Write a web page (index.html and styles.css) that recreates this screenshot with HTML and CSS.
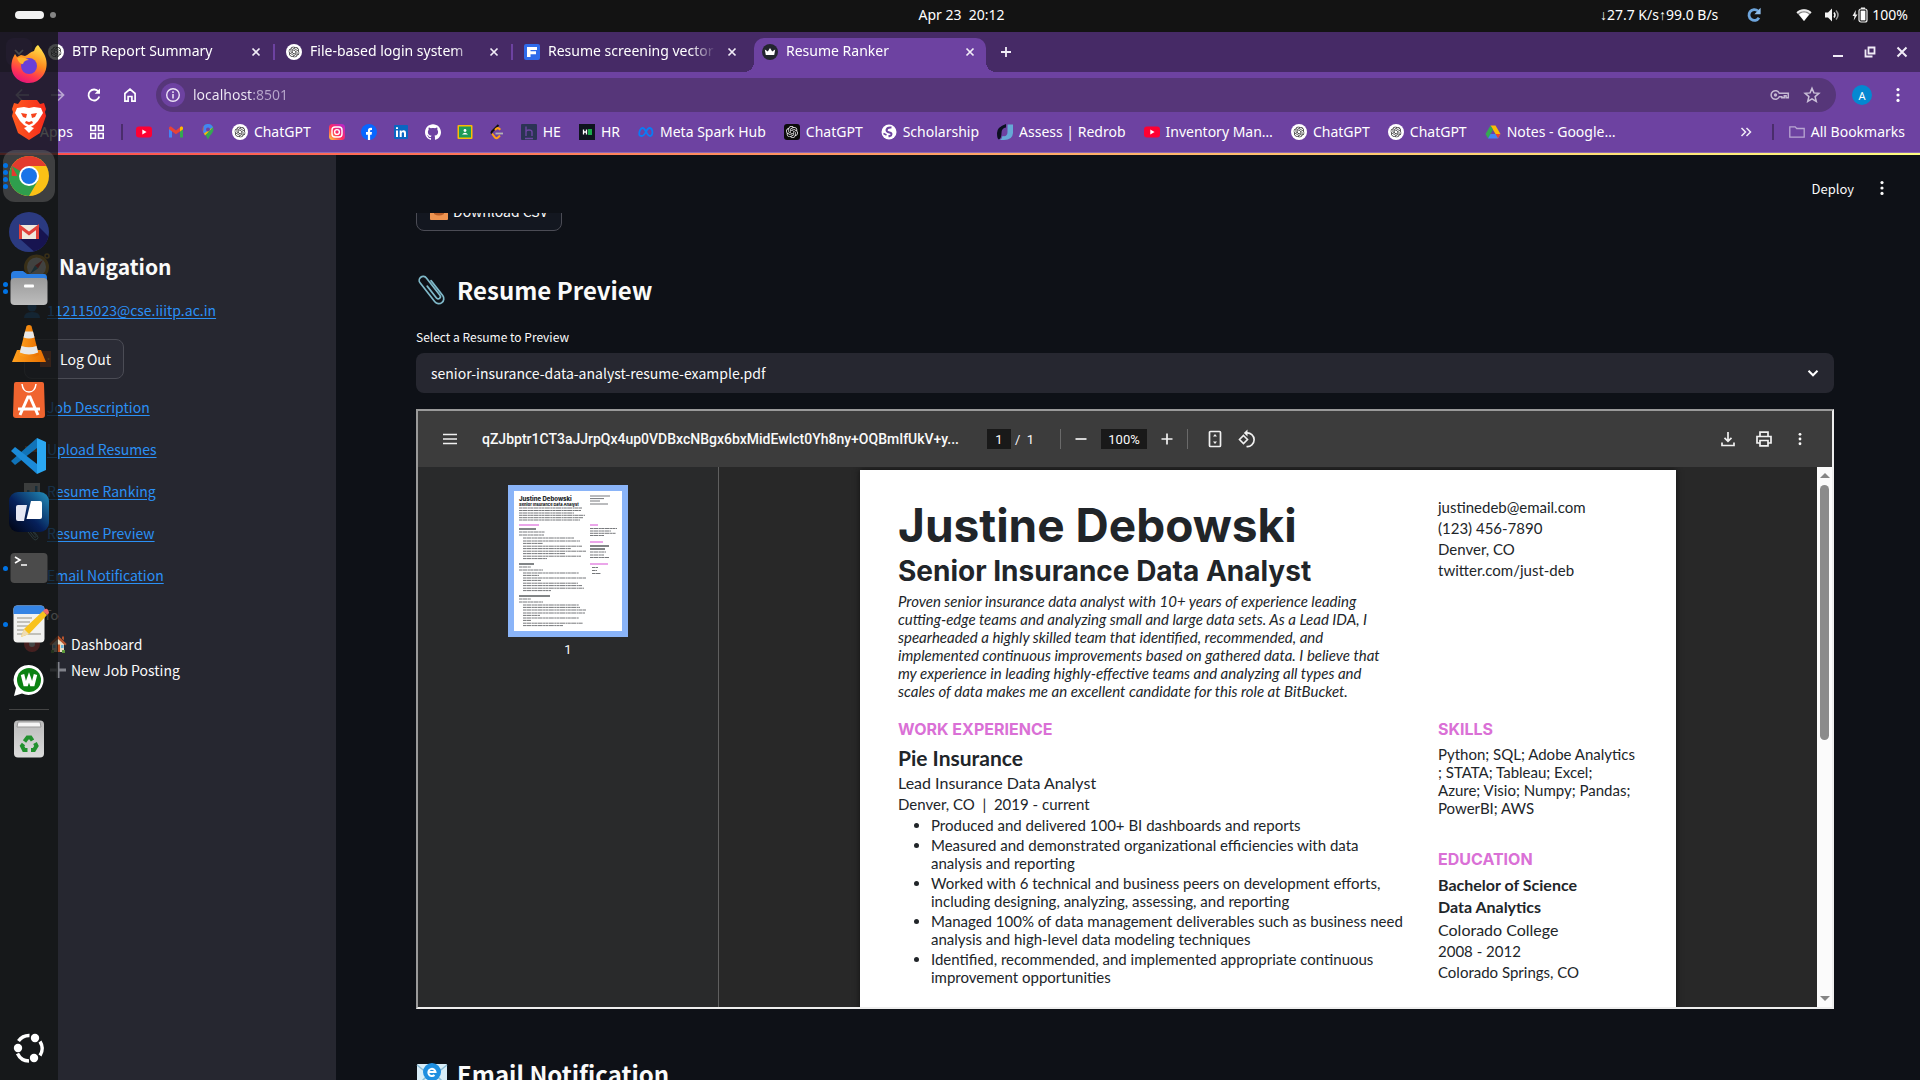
FILE: index.html
```html
<!DOCTYPE html>
<html lang="en">
<head>
<meta charset="utf-8">
<title>Resume Ranker</title>
<link rel="stylesheet" href="styles.css">
</head>
<body>
<svg class="defs" aria-hidden="true">
  <defs>
    <linearGradient id="g-fox" x1="0.7" y1="0" x2="0.3" y2="1"><stop offset="0" stop-color="#ffe14a"/><stop offset=".45" stop-color="#ff8a1e"/><stop offset=".75" stop-color="#ff3750"/><stop offset="1" stop-color="#e3127e"/></linearGradient>
    <linearGradient id="g-ig" x1="0" y1="1" x2="1" y2="0"><stop offset="0" stop-color="#ffd43a"/><stop offset=".45" stop-color="#ff2a5f"/><stop offset="1" stop-color="#b026d8"/></linearGradient>
    <linearGradient id="g-brave" x1="0" y1="0" x2="1" y2="0"><stop offset="0" stop-color="#ff5a1f"/><stop offset="1" stop-color="#f52a1c"/></linearGradient>
    <linearGradient id="g-file" x1="0" y1="0" x2="0" y2="1"><stop offset="0" stop-color="#9a9a9a"/><stop offset="1" stop-color="#bdbdbd"/></linearGradient>
    <linearGradient id="g-vlc" x1="0" y1="0" x2="1" y2="0"><stop offset="0" stop-color="#ffa01e"/><stop offset="1" stop-color="#e86f00"/></linearGradient>
    <linearGradient id="g-deck" x1="0" y1="1" x2="1" y2="0"><stop offset="0" stop-color="#00020f"/><stop offset=".45" stop-color="#06205a"/><stop offset="1" stop-color="#2390bd"/></linearGradient>
    <linearGradient id="g-bin" x1="0" y1="0" x2="0" y2="1"><stop offset="0" stop-color="#bbb"/><stop offset="1" stop-color="#dcdcdc"/></linearGradient>
  </defs>
  <symbol id="i-knot" viewBox="0 0 24 24"><path fill="currentColor" d="M22.2819 9.8211a5.9847 5.9847 0 0 0-.5157-4.9108 6.0462 6.0462 0 0 0-6.5098-2.9A6.0651 6.0651 0 0 0 4.9807 4.1818a5.9847 5.9847 0 0 0-3.9977 2.9 6.0462 6.0462 0 0 0 .7427 7.0966 5.98 5.98 0 0 0 .511 4.9107 6.051 6.051 0 0 0 6.5146 2.9001A5.9847 5.9847 0 0 0 13.2599 24a6.0557 6.0557 0 0 0 5.7718-4.2058 5.9894 5.9894 0 0 0 3.9977-2.9001 6.0557 6.0557 0 0 0-.7475-7.0729zm-9.022 12.6081a4.4755 4.4755 0 0 1-2.8764-1.0408l.1419-.0804 4.7783-2.7582a.7948.7948 0 0 0 .3927-.6813v-6.7369l2.02 1.1686a.071.071 0 0 1 .038.052v5.5826a4.504 4.504 0 0 1-4.4945 4.4944zm-9.6607-4.1254a4.4708 4.4708 0 0 1-.5346-3.0137l.142.0852 4.783 2.7582a.7712.7712 0 0 0 .7806 0l5.8428-3.3685v2.3324a.0804.0804 0 0 1-.0332.0615L9.74 19.9502a4.4992 4.4992 0 0 1-6.1408-1.6464zM2.3408 7.8956a4.485 4.485 0 0 1 2.3655-1.9728V11.6a.7664.7664 0 0 0 .3879.6765l5.8144 3.3543-2.0201 1.1685a.0757.0757 0 0 1-.071 0l-4.8303-2.7865A4.504 4.504 0 0 1 2.3408 7.872zm16.5963 3.8558L13.1038 8.364 15.1192 7.2a.0757.0757 0 0 1 .071 0l4.8303 2.7913a4.4944 4.4944 0 0 1-.6765 8.1042v-5.6772a.79.79 0 0 0-.407-.667zm2.0107-3.0231l-.142-.0852-4.7735-2.7818a.7759.7759 0 0 0-.7854 0L9.409 9.2297V6.8974a.0662.0662 0 0 1 .0284-.0615l4.8303-2.7866a4.4992 4.4992 0 0 1 6.6802 4.66zM8.3065 12.863l-2.02-1.1638a.0804.0804 0 0 1-.038-.0567V6.0742a4.4992 4.4992 0 0 1 7.3757-3.4537l-.142.0805L8.704 5.459a.7948.7948 0 0 0-.3927.6813zm1.0976-2.3654l2.602-1.4998 2.6069 1.4998v2.9994l-2.5974 1.4997-2.6067-1.4997Z"/></symbol>
  <symbol id="i-gpt" viewBox="0 0 16 16"><circle cx="8" cy="8" r="8" fill="#fff"/><use href="#i-knot" x="2.5" y="2.5" width="11" height="11" color="#222"/></symbol>
  <symbol id="i-gptdark" viewBox="0 0 16 16"><rect width="16" height="16" rx="3" fill="#0c0c0c"/><use href="#i-knot" x="2" y="2" width="12" height="12" color="#eee"/></symbol>
  <symbol id="i-x" viewBox="0 0 16 16"><path d="M4.5 4.5l7 7m0-7l-7 7" stroke="#f1ecf7" stroke-width="1.7"/></symbol>
  <symbol id="i-yt" viewBox="0 0 16 16"><rect y="2.5" width="16" height="11" rx="3" fill="#f03"/><path d="M6.3 5.5v5L10.6 8z" fill="#fff"/></symbol>
  <symbol id="i-dots" viewBox="0 0 16 16"><g fill="currentColor"><circle cx="8" cy="2.6" r="1.6"/><circle cx="8" cy="8" r="1.6"/><circle cx="8" cy="13.4" r="1.6"/></g></symbol>
  <symbol id="i-clip" viewBox="0 0 32 32"><path d="M5 -8V11a5 5 0 0 1-10 0V-13a4 4 0 0 1 8 0V9a2.200 2.200 0 0 1-4.400 0V-6" transform="translate(16 16) rotate(-38)" fill="none" stroke="#7fb9c9" stroke-width="1.700" stroke-linecap="round"/></symbol>
</svg>

<div class="desktop">
  <header class="panel">
    <div class="panel-left"><span class="ws-active"></span><span class="ws"></span></div>
    <time class="clock">Apr 23&nbsp; 20:12</time>
    <div class="panel-right">
      <span class="net">↓27.7 K/s↑99.0 B/s</span>
      <svg class="sync" viewBox="0 0 16 16"><path d="M13 10.8A5.4 5.4 0 1 1 12 4" fill="none" stroke="#6ea5dc" stroke-width="2.8"/><path d="M14.6.8v6.4H8.4z" fill="#8fbdea"/></svg>
      <svg class="ic16" viewBox="0 0 16 16"><path d="M.5 5.2C4.6 1.2 11.4 1.2 15.5 5.2L8 14z" fill="#888"/><path d="M.5 5.2C4.6 1.2 11.4 1.2 15.5 5.2l-1.3 1.5C10.8 3.4 5.2 3.4 1.8 6.700z" fill="#eee"/><path d="M3 7.400c3-2.600 7-2.600 10 0L8 14z" fill="#fff"/></svg>
      <svg class="ic16" viewBox="0 0 16 16"><path d="M1 5.500h3L8 1.500v13L4 10.500H1z" fill="#f4f4f4"/><path d="M10 5.500q2 2.500 0 5" stroke="#f4f4f4" stroke-width="1.500" fill="none"/><path d="M12 3.500q4 4.500 0 9" stroke="#999" stroke-width="1.500" fill="none"/></svg>
      <span class="battery"><svg class="ic16" viewBox="0 0 16 16"><path d="M3.800 3L.5 9h2l-.8 4.500L5.500 7.500h-2z" fill="#eee"/><rect x="7" y="2" width="8" height="13" rx="2" fill="none" stroke="#eee" stroke-width="1.200"/><rect x="9" y=".5" width="4" height="1.500" fill="#eee"/><rect x="8.600" y="3.600" width="4.800" height="9.800" fill="#fff"/></svg>100%</span>
    </div>
  </header>

  <div class="tabstrip">
    <button class="tab-search" aria-label="Search tabs"><svg class="ic16" viewBox="0 0 16 16"><path d="M4 6l4 4 4-4" fill="none" stroke="#fff" stroke-width="1.700"/></svg></button>
    <div class="tab"><svg class="ic16"><use href="#i-gpt"/></svg><span class="tab-title">BTP Report Summary</span><button class="tab-close" aria-label="Close tab"><svg class="ic16"><use href="#i-x"/></svg></button></div>
    <div class="tab"><svg class="ic16"><use href="#i-gpt"/></svg><span class="tab-title">File-based login system</span><button class="tab-close" aria-label="Close tab"><svg class="ic16"><use href="#i-x"/></svg></button></div>
    <div class="tab"><svg class="ic16" viewBox="0 0 16 16"><rect width="16" height="16" rx="2" fill="#2f6bea"/><path d="M3 3h10v3H6.500v1.200H12v3H6.500V13H3z" fill="#fff"/></svg><span class="tab-title">Resume screening vector</span><button class="tab-close" aria-label="Close tab"><svg class="ic16"><use href="#i-x"/></svg></button></div>
    <div class="tab tab-active"><svg class="ic16" viewBox="0 0 16 16"><circle cx="8" cy="8" r="8" fill="#23252f"/><path d="M2.800 5.500L5.800 7.500 8 4l2.200 3.500 3-2-1 5.500H3.800z" fill="#fff"/></svg><span class="tab-title">Resume Ranker</span><button class="tab-close" aria-label="Close tab"><svg class="ic16"><use href="#i-x"/></svg></button></div>
    <button class="tab-new" aria-label="New tab"><svg class="ic16" viewBox="0 0 16 16"><path d="M8 3v10M3 8h10" stroke="#f1ecf7" stroke-width="1.800"/></svg></button>
    <div class="winctl">
      <button aria-label="Minimize"><svg class="ic16" viewBox="0 0 16 16"><path d="M3 12h10" stroke="#f1ecf7" stroke-width="2"/></svg></button>
      <button aria-label="Restore"><svg class="ic16" viewBox="0 0 16 16"><path d="M6.500 3.500h6v6h-6zM3.500 5.500v7h7" fill="none" stroke="#f1ecf7" stroke-width="1.800"/></svg></button>
      <button aria-label="Close"><svg class="ic16" viewBox="0 0 16 16"><path d="M3.500 3.500l9 9m0-9l-9 9" stroke="#f1ecf7" stroke-width="2"/></svg></button>
    </div>
  </div>

  <div class="toolbar">
    <nav class="tb-nav">
      <button aria-label="Back"><svg class="ic16" viewBox="0 0 16 16"><path d="M15 8H2.500M8 2.500L2.500 8 8 13.500" fill="none" stroke="#b9a6d2" stroke-width="1.700"/></svg></button>
      <button aria-label="Forward"><svg class="ic16" viewBox="0 0 16 16"><path d="M1 8h12.500M8 2.500L13.500 8 8 13.500" fill="none" stroke="#b9a6d2" stroke-width="1.700"/></svg></button>
      <button aria-label="Reload"><svg class="ic16" viewBox="0 0 16 16"><path d="M13.300 9.500A5.500 5.500 0 1 1 12.500 4.800" fill="none" stroke="#fff" stroke-width="1.800"/><path d="M14 1.500v5.300H8.700z" fill="#fff"/></svg></button>
      <button aria-label="Home"><svg class="ic16" viewBox="0 0 16 16"><path d="M2.900 6.500L8 2.200l5.100 4.300v7.600H9.900V9.500H6.100v4.600H2.900z" fill="none" stroke="#fff" stroke-width="1.700"/></svg></button>
    </nav>
    <div class="omnibox">
      <span class="site-info"><svg class="ic16" viewBox="0 0 16 16"><circle cx="8" cy="8" r="6.300" fill="none" stroke="#eee6f7" stroke-width="1.400"/><path d="M8 7v4.500M8 4.300v1.700" stroke="#eee6f7" stroke-width="1.500"/></svg></span>
      <input class="url" type="text" value="localhost:8501" aria-label="Address and search bar">
      <svg class="ic20" viewBox="0 0 20 20"><path d="M9.300 8.200h9v4.600h-2.200v-2h-1.800v2h-2.500v-1h-2.500a4.300 4.300 0 1 1 0-3.600z" fill="none" stroke="#c4b8d2" stroke-width="1.500"/><circle cx="5.500" cy="10" r="1.700" fill="#c4b8d2"/></svg>
      <svg class="ic20" viewBox="0 0 20 20"><path d="M10 3.200l1.900 4.700 5 .4-3.800 3.300 1.200 4.900-4.300-2.700-4.300 2.700 1.200-4.900L3.100 8.300l5-.4z" fill="none" stroke="#cabfd8" stroke-width="1.500"/></svg>
    </div>
    <button class="avatar">A</button>
    <button class="tb-menu" aria-label="Menu"><svg class="ic16"><use href="#i-dots"/></svg></button>
  </div>

  <nav class="bookmarks">
    <a href="#" class="bm bm-apps"><svg class="ic16" viewBox="0 0 16 16"><path d="M2 2h3v3H2zM2 7h3v3H2zM7 2h3v3H7z" fill="#4caf50"/></svg>Apps</a>
    <a href="#" class="bm bm-grid" aria-label="Tab groups"><svg class="ic16" viewBox="0 0 16 16"><path d="M1.800 1.800h4.700v4.700H1.800zM9.500 1.800h4.700v4.700H9.500zM1.800 9.500h4.700v4.700H1.800zM9.500 9.500h4.700v4.700H9.500z" fill="none" stroke="#fff" stroke-width="1.600"/></svg></a>
    <span class="bm-sep"></span>
    <a href="#" class="bm" aria-label="YouTube"><svg class="ic16"><use href="#i-yt"/></svg></a>
    <a href="#" class="bm" aria-label="Gmail"><svg class="ic16" viewBox="0 0 16 16"><path d="M1 4v9.500h3V6z" fill="#4285f4"/><path d="M15 4v9.500h-3V6z" fill="#34a853"/><path d="M1 4q0-2 2-1.500L8 6.500l5-4q2-.5 2 1.500v1.200L8 10.200 1 5.200z" fill="#ea4335"/><path d="M12 3.300l1.200-.8Q15 2 15 4v1.200l-3 2.200z" fill="#fbbc04"/></svg></a>
    <a href="#" class="bm" aria-label="Maps"><svg class="ic16" viewBox="0 0 16 16"><path d="M8 0a5.500 5.500 0 0 0-5.500 5.500C2.500 9 7 11.500 8 16c1-4.500 5.500-7 5.500-10.500A5.500 5.500 0 0 0 8 0z" fill="#34a853"/><path d="M3.700 2L8 5.500 4.400 10C3 8.300 2.500 7 2.500 5.500c0-1.300.4-2.500 1.200-3.500z" fill="#ea4335"/><path d="M3.700 2A5.500 5.500 0 0 1 13 3.200L4.400 10 3 8z" fill="#4285f4"/><path d="M13 3.200L5 11.500 4 9.500z" fill="#fbbc04"/><circle cx="8" cy="5.500" r="2" fill="#6d42a1"/></svg></a>
    <a href="#" class="bm"><svg class="ic16"><use href="#i-gpt"/></svg>ChatGPT</a>
    <a href="#" class="bm" aria-label="Instagram"><svg class="ic16" viewBox="0 0 16 16"><rect width="16" height="16" rx="3.500" fill="url(#g-ig)"/><rect x="3" y="3" width="10" height="10" rx="3" fill="none" stroke="#fff" stroke-width="1.400"/><circle cx="8" cy="8" r="2.400" fill="none" stroke="#fff" stroke-width="1.400"/></svg></a>
    <a href="#" class="bm" aria-label="Facebook"><svg class="ic16" viewBox="0 0 16 16"><circle cx="8" cy="8" r="8" fill="#0866ff"/><path d="M6.900 16v-5.300H5V8h1.900V6.800c0-2.300 1.300-3.300 4.100-2.900v2.200c-1.400-.1-1.900 0-1.900 1.100V8H11l-.4 2.700H9.100V16z" fill="#fff"/></svg></a>
    <a href="#" class="bm" aria-label="LinkedIn"><svg class="ic16" viewBox="0 0 16 16"><rect x="1" y="1" width="14" height="14" rx="1" fill="#0a66c2"/><path d="M3 6.500h2V13H3zM3 3.200h2V5H3zM6.700 6.500h1.900v.9c1-1.600 4.400-1.500 4.400 1.500V13h-2V9.600c0-2-2.300-1.800-2.300 0V13h-2z" fill="#fff"/></svg></a>
    <a href="#" class="bm" aria-label="GitHub"><svg class="ic16" viewBox="0 0 24 24"><path fill="#fff" d="M12 .297c-6.630 0-12 5.373-12 12 0 5.303 3.438 9.800 8.205 11.385.6.113.82-.258.82-.577 0-.285-.01-1.040-.015-2.040-3.338.724-4.042-1.610-4.042-1.610C4.422 18.070 3.633 17.700 3.633 17.700c-1.087-.744.084-.729.084-.729 1.205.084 1.838 1.236 1.838 1.236 1.070 1.835 2.809 1.305 3.495.998.108-.776.417-1.305.76-1.605-2.665-.3-5.466-1.332-5.466-5.930 0-1.310.465-2.380 1.235-3.220-.135-.303-.54-1.523.105-3.176 0 0 1.005-.322 3.300 1.230.96-.267 1.980-.399 3-.405 1.020.006 2.040.138 3 .405 2.280-1.552 3.285-1.230 3.285-1.230.645 1.653.24 2.873.12 3.176.765.840 1.230 1.910 1.230 3.220 0 4.610-2.805 5.625-5.475 5.920.42.360.81 1.096.81 2.220 0 1.606-.015 2.896-.015 3.286 0 .315.210.69.825.57C20.565 22.092 24 17.592 24 12.297c0-6.627-5.373-12-12-12"/></svg></a>
    <a href="#" class="bm" aria-label="Classroom"><svg class="ic16" viewBox="0 0 16 16"><rect x=".5" y="1" width="15" height="14" rx="1" fill="#fbbc04"/><rect x="2" y="2.500" width="12" height="11" fill="#1e9b57"/><circle cx="8" cy="6.500" r="1.400" fill="#fff"/><path d="M5 10.500q3-3.500 6 0z" fill="#fff"/></svg></a>
    <a href="#" class="bm" aria-label="LeetCode"><svg class="ic16" viewBox="0 0 16 16"><path d="M9.500 1L3 7.500q-1 1.200 0 2.500" fill="none" stroke="#111" stroke-width="2"/><path d="M3 9.500l3 4q1.500 1.500 3 0l2-2M6 6l1.500-1.500q1.500-1 3 .5l.8.800" fill="none" stroke="#ffa116" stroke-width="2"/><path d="M6.500 9.500H14" stroke="#b3b3b3" stroke-width="1.800"/></svg></a>
    <a href="#" class="bm"><svg class="ic16" viewBox="0 0 16 16"><rect width="16" height="16" rx="1" fill="#2c3454"/><path d="M5 2.500v9.500M5 8q0-2 3-2t3 2v4M4 14.500h8" fill="none" stroke="#6d45a0" stroke-width="1.400"/></svg>HE</a>
    <a href="#" class="bm"><svg class="ic16" viewBox="0 0 16 16"><rect width="16" height="16" fill="#0e141e"/><path d="M4.500 5.500v5M7.500 5.500v5M4.500 8h3" stroke="#fff" stroke-width="1.300"/><rect x="9" y="5" width="4" height="6" fill="#1ba94c"/></svg>HR</a>
    <a href="#" class="bm"><svg class="ic16" viewBox="0 0 16 16"><path d="M1.200 10.500C1 7.500 2.500 4 4.600 4 7.500 4 8.800 12 12 12c3.600 0 3-8-.6-8C8.500 4 7.500 12 3.700 12c-1.500 0-2.400-.6-2.500-1.500z" fill="none" stroke="#0a7cf5" stroke-width="1.800"/></svg>Meta Spark Hub</a>
    <a href="#" class="bm"><svg class="ic16"><use href="#i-gptdark"/></svg>ChatGPT</a>
    <a href="#" class="bm"><svg class="ic16" viewBox="0 0 16 16"><circle cx="8" cy="8" r="7.500" fill="#fff"/><path d="M10.500 3.500Q6 3 5.500 6q0 2 3 2.500t1.500 3l-2.500 1" fill="none" stroke="#6d42a1" stroke-width="2"/><path d="M2.500 9.500l3 1.500" stroke="#6d42a1" stroke-width="1.400"/></svg>Scholarship</a>
    <a href="#" class="bm"><svg class="ic16" viewBox="0 0 16 16"><path d="M9 0v3.500Q4.500 4 4.500 9T2 15.500Q0 15 0 9T9 0z" fill="#0b1020"/><path d="M10.500.5H16V9q-.5 7-9 7H2.500Q5 15 5.500 12q5 1 5-4z" fill="#66a9d6"/></svg>Assess | Redrob</a>
    <a href="#" class="bm"><svg class="ic16"><use href="#i-yt"/></svg>Inventory Man…</a>
    <a href="#" class="bm"><svg class="ic16"><use href="#i-gpt"/></svg>ChatGPT</a>
    <a href="#" class="bm"><svg class="ic16"><use href="#i-gpt"/></svg>ChatGPT</a>
    <a href="#" class="bm"><svg class="ic16" viewBox="0 0 16 16"><path d="M5.500 1.500h5L15.500 10h-5z" fill="#fbbc04"/><path d="M5.500 1.500L8 5.800 3 14.500.5 10z" fill="#34a853"/><path d="M5.500 10h10L13 14.500H3z" fill="#4285f4"/><path d="M10.500 10h5L13 14.500z" fill="#ea4335"/></svg>Notes - Google…</a>
    <span class="bm-end">
      <button class="bm-more" aria-label="More bookmarks"><svg class="ic16" viewBox="0 0 16 16"><path d="M3.500 4l4 4-4 4M8.500 4l4 4-4 4" fill="none" stroke="#f1ecf7" stroke-width="1.500"/></svg></button>
      <span class="bm-sep"></span>
      <a href="#" class="bm bm-all"><svg class="ic16" viewBox="0 0 16 16"><path d="M.8 2.800h5.400l1.500 1.700h7.500v8.700H.8z" fill="none" stroke="#b9a6d2" stroke-width="1.300"/></svg>All Bookmarks</a>
    </span>
  </nav>

  <div class="app">
    <aside class="sidebar">
      <h2 class="side-title"><svg class="compass" viewBox="0 0 26 26"><circle cx="12.500" cy="14" r="11" fill="#e9e4da" stroke="#c58d22" stroke-width="3"/><circle cx="23" cy="3" r="2" fill="none" stroke="#c58d22" stroke-width="1.500"/><path d="M19 7l-5 8.500-3-3z" fill="#e0352b"/><path d="M6 21l5-8.500 3 3z" fill="#3c8ba0"/></svg>Navigation</h2>
      <a class="side-link" href="#"><svg class="ic16" viewBox="0 0 16 16"><circle cx="8" cy="5" r="4.500" fill="#1c5f9e"/><path d="M0 16q0-6 8-6t8 6z" fill="#1c5f9e"/></svg>112115023@cse.iiitp.ac.in</a>
      <button class="st-button logout"><svg class="ic16" viewBox="0 0 16 16"><rect x="3" width="11" height="16" fill="#b4552f"/><circle cx="11.500" cy="8" r="1" fill="#f2c14e"/></svg>Log Out</button>
      <a class="side-link" href="#"><svg class="ic16" viewBox="0 0 16 16"><rect x="2" y="1" width="12" height="15" fill="#a2795a"/></svg>Job Description</a>
      <a class="side-link" href="#"><svg class="ic16" viewBox="0 0 16 16"><rect x="1" y="5" width="15" height="6" fill="#b3673a"/></svg>Upload Resumes</a>
      <a class="side-link" href="#"><svg class="ic16" viewBox="0 0 16 16"><rect x="0" y="0" width="16" height="16" fill="#ccc"/><path d="M3 14V7h2.500v7zM11 14V3h2.500v11z" fill="#2a82b8"/></svg>Resume Ranking</a>
      <a class="side-link" href="#"><svg class="ic16"><use href="#i-clip"/></svg>Resume Preview</a>
      <a class="side-link" href="#"><svg class="ic16" viewBox="0 0 16 16"><rect y="3" width="16" height="11" fill="#9bb"/></svg>Email Notification</a>
      <fieldset class="goto">
        <legend>Go To</legend>
        <label><input type="radio" name="goto" checked><svg class="ic18" viewBox="0 0 18 18"><path d="M3 8l6-5 6 5v9H3z" fill="#e8dcc4"/><path d="M9 .5L.3 9l1.500 1.500L9 4l7.200 6.500L17.700 9z" fill="#b5532d"/><path d="M13 1.500h2v4l-2-2z" fill="#b5532d"/><path d="M8 9.500h3V17H8z" fill="#c4552a"/><path d="M12 10h2.500v3H12zM4 10h2.500v3H4z" fill="#68b0d8"/><path d="M2 15h3v3H2zM13 15h3v3h-3z" fill="#5c9a3c"/></svg>Dashboard</label>
        <label><input type="radio" name="goto"><svg class="ic18" viewBox="0 0 18 18"><path d="M9 1v16M1 9h16" stroke="#80828a" stroke-width="3"/></svg>New Job Posting</label>
      </fieldset>
    </aside>

    <main class="main">
      <div class="st-header">
        <button class="deploy">Deploy</button>
        <button class="st-menu" aria-label="Main menu"><svg class="ic16"><use href="#i-dots"/></svg></button>
      </div>
      <div class="scroll">
        <div class="content">
          <button class="st-button download"><svg class="ic18" viewBox="0 0 18 18"><rect width="18" height="18" rx="1" fill="#ef9450"/><path d="M4 7h10v5q-5 3-10 0z" fill="#b95e28"/></svg>Download CSV</button>
          <h2 class="st-h2"><svg class="ic32"><use href="#i-clip"/></svg>Resume Preview</h2>
          <label class="st-label" for="resume">Select a Resume to Preview</label>
          <div class="select-wrap">
            <select id="resume"><option>senior-insurance-data-analyst-resume-example.pdf</option></select>
            <svg class="chev" viewBox="0 0 16 16"><path d="M3.500 5.800L8 10.300l4.500-4.500" fill="none" stroke="#fff" stroke-width="2"/></svg>
          </div>

          <section class="pdf">
            <div class="pdf-bar">
              <button class="pb" aria-label="Menu"><svg class="ic20" viewBox="0 0 20 20"><path d="M3 5.500h14M3 10h14M3 14.500h14" stroke="#f1f1f1" stroke-width="1.700"/></svg></button>
              <span class="pdf-title">qZJbptr1CT3aJJrpQx4up0VDBxcNBgx6bxMidEwlct0Yh8ny+OQBmIfUkV+y...</span>
              <input class="page-no" type="text" value="1" aria-label="Page number"><span class="page-of">/&nbsp; 1</span>
              <span class="pb-sep"></span>
              <button class="pb" aria-label="Zoom out"><svg class="ic20" viewBox="0 0 20 20"><path d="M4.500 10h11" stroke="#f1f1f1" stroke-width="1.700"/></svg></button>
              <input class="zoom" type="text" value="100%" aria-label="Zoom level">
              <button class="pb" aria-label="Zoom in"><svg class="ic20" viewBox="0 0 20 20"><path d="M4.500 10h11M10 4.500v11" stroke="#f1f1f1" stroke-width="1.700"/></svg></button>
              <span class="pb-sep"></span>
              <button class="pb pb-fit" aria-label="Fit to page"><svg class="ic20" viewBox="0 0 20 20"><rect x="4.500" y="2.500" width="11" height="15" rx="1" fill="none" stroke="#f1f1f1" stroke-width="1.700"/><path d="M10 5l2 2.500H8zM10 15l2-2.500H8z" fill="#f1f1f1"/></svg></button>
              <button class="pb pb-rot" aria-label="Rotate"><svg class="ic20" viewBox="0 0 20 20"><path d="M6.500 6.500l4 4-4 4-4-4z" fill="none" stroke="#f1f1f1" stroke-width="1.600"/><path d="M9.500 4a6.800 6.800 0 1 1 0 13.500" fill="none" stroke="#f1f1f1" stroke-width="1.700"/><path d="M10.500.5v7L6.800 4z" fill="#f1f1f1"/></svg></button>
              <span class="pdf-actions">
                <button class="pb" aria-label="Download"><svg class="ic20" viewBox="0 0 20 20"><path d="M10 3v9M6.500 8.800L10 12.300l3.500-3.500M4 13.500v3h12v-3" fill="none" stroke="#f1f1f1" stroke-width="1.700"/></svg></button>
                <button class="pb" aria-label="Print"><svg class="ic20" viewBox="0 0 20 20"><path d="M6 7V3.200h8V7M6 14H3V7.500h14V14h-3M6 11.500h8v5.300H6z" fill="none" stroke="#f1f1f1" stroke-width="1.700"/></svg></button>
                <button class="pb" aria-label="More actions"><svg class="ic14"><use href="#i-dots"/></svg></button>
              </span>
            </div>
            <div class="pdf-body">
              <div class="thumbs">
                <div class="thumb">
                  <p class="th-name">Justine Debowski</p>
                  <p class="th-role">Senior Insurance Data Analyst</p>
                  <svg class="th-lines" viewBox="0 0 98 121">
                    <g fill="none" stroke="#77797c" stroke-width="1" stroke-dasharray="3 .4 5 .5 2 .3">
                      <path d="M0 1h63M0 3.500h62M0 6h55M0 8.300h66M0 10.700h64M0 13h61"/>
                      <path d="M0 25h26M0 28h25M4 31h51M4 34h57M4 36.400h20M4 39.200h59M4 41.600h48M4 44.200h63M4 46.600h42M4 49.200h58M4 51.600h24"/>
                      <path d="M0 60h12M0 63h24M4 66h56M4 68.400h16M4 71h63M4 73.400h18M4 76.200h55M4 78.600h59M4 81.200h61M4 83.600h28"/>
                      <path d="M0 92h12M0 95h24M4 98h56M4 100.400h57M4 103h63M4 106h62M4 108.400h17M4 111h56M4 113.400h8M4 116.200h60M4 118.600h40"/>
                      <path d="M71 21.500h27M71 24h21M71 26.300h26M71 28.500h14M71 45h16M71 48h14M71 50.500h19M73 60.500h6M73 63.500h5M73 66.500h9"/>
                    </g>
                    <g fill="none" stroke="#5a5d60" stroke-width="1.500"><path d="M0 22h17M0 57h15M0 89h31M71 39h19M71 42h15"/></g>
                    <g fill="none" stroke="#eba6ea" stroke-width="1.800"><path d="M0 18h20M71 18h8M71 35h13M71 57h18"/></g>
                  </svg>
                  <svg class="th-contact" viewBox="0 0 20 11"><path d="M0 1h20M0 3.600h14M0 6h10M0 9h18" fill="none" stroke="#77797c"/></svg>
                </div>
                <span class="th-no">1</span>
              </div>
              <div class="viewer">
                <article class="sheet">
                  <header class="r-head">
                    <h1>Justine Debowski</h1>
                    <h2>Senior Insurance Data Analyst</h2>
                    <p class="summary">Proven senior insurance data analyst with 10+ years of experience leading<br>cutting-edge teams and analyzing small and large data sets. As a Lead IDA, I<br>spearheaded a highly skilled team that identified, recommended, and<br>implemented continuous improvements based on gathered data. I believe that<br>my experience in leading highly-effective teams and analyzing all types and<br>scales of data makes me an excellent candidate for this role at BitBucket.</p>
                  </header>
                  <address class="contact">justinedeb@email.com<br>(123) 456-7890<br>Denver, CO<br>twitter.com/just-deb</address>
                  <section class="work">
                    <h3>WORK EXPERIENCE</h3>
                    <h4>Pie Insurance</h4>
                    <p class="line16">Lead Insurance Data Analyst</p>
                    <p class="line15">Denver, CO &nbsp;|&nbsp; 2019 - current</p>
                    <ul>
                      <li>Produced and delivered 100+ BI dashboards and reports</li>
                      <li>Measured and demonstrated organizational efficiencies with data<br>analysis and reporting</li>
                      <li>Worked with 6 technical and business peers on development efforts,<br>including designing, analyzing, assessing, and reporting</li>
                      <li>Managed 100% of data management deliverables such as business need<br>analysis and high-level data modeling techniques</li>
                      <li>Identified, recommended, and implemented appropriate continuous<br>improvement opportunities</li>
                    </ul>
                  </section>
                  <section class="extra">
                    <h3>SKILLS</h3>
                    <p class="skills">Python; SQL; Adobe Analytics<br>; STATA; Tableau; Excel;<br>Azure; Visio; Numpy; Pandas;<br>PowerBI; AWS</p>
                    <h3>EDUCATION</h3>
                    <p class="degree">Bachelor of Science<br>Data Analytics</p>
                    <p class="line16">Colorado College</p>
                    <p class="line15">2008 - 2012<br>Colorado Springs, CO</p>
                  </section>
                </article>
                <div class="vscroll"><span class="arrow-up"></span><span class="vthumb"></span><span class="arrow-down"></span></div>
              </div>
            </div>
          </section>

          <h2 class="st-h2 mail"><svg class="ic32" viewBox="0 0 32 32"><rect x="1" y="6" width="30" height="22" rx="1" fill="#d9eef8"/><path d="M1 7l15 12L31 7M1 28l11-11M31 28L20 17" fill="none" stroke="#8dbdd6" stroke-width="1.500"/><circle cx="16" cy="14" r="9" fill="#1f8fe0"/><path d="M12.500 14h7a3.600 3.600 0 1 0-1 3" fill="none" stroke="#fff" stroke-width="2"/></svg>Email Notification</h2>
        </div>
      </div>
    </main>
  </div>

  <nav class="dock" aria-label="Dock">
    <button class="di" aria-label="Firefox"><svg class="ic40" viewBox="0 0 40 40"><path d="M29 1c3 4 7 9 8 14 3 12-5 24-17 24S0 29 3 17c.5-3 2-5 3-7l2 3 4-2 4 1c3-1 5-4 9-5 1-3 2-5 4-6z" fill="url(#g-fox)"/><circle cx="20" cy="22" r="8" fill="#6a3fd6"/><path d="M8 14q6-2 12 2-5 0-6 4-4 0-6-6z" fill="#ffb52e"/></svg></button>
    <button class="di" aria-label="Brave"><svg class="ic40" viewBox="0 0 40 40"><path d="M12 0h16l3 4 4-1 2 6-1 3 1 4-6 17-11 7-11-7L3 16l1-4-1-3 2-6 4 1z" fill="url(#g-brave)"/><path d="M8 8l7-1 5 1 5-1 7 1 2 5-5 8-4 4-5 3-5-3-4-4-5-8z" fill="#fff"/><path d="M12 13l6 1-1 4-3-1zM28 13l-6 1 1 4 3-1zM16 23l4 2 4-2-1-2-3 1-3-1z" fill="#f6431d"/><path d="M15 28l5-2 5 2-5 5z" fill="#fff"/></svg></button>
    <button class="di di-on" aria-label="Chrome"><span class="dots"><i></i><i></i><i></i><i></i></span><svg class="ic40" viewBox="0 0 40 40"><circle cx="20" cy="20" r="20" fill="#fbc116"/><path d="M20 20L2.700 10a20 20 0 0 0 17.300 30l8.700-15z" fill="#2f9e4d"/><path d="M20 20H2.700V10A20 20 0 0 1 37.300 10H20z" fill="#e33b2e"/><path d="M2.700 10l8.600 15L20 20z" fill="#2f9e4d"/><circle cx="20" cy="20" r="10" fill="#fff"/><circle cx="20" cy="20" r="8" fill="#1a73e8"/></svg></button>
    <button class="di" aria-label="Gmail"><svg class="ic40" viewBox="0 0 40 40"><circle cx="20" cy="20" r="20" fill="#2b3a80"/><path d="M29 14l10.500 10.500A20 20 0 0 1 25 39.400L11 27z" fill="#171450"/><rect x="10" y="13" width="20" height="14" rx="1" fill="#efe9dc"/><path d="M11.500 27V15l8.500 6.500 8.500-6.500v12" fill="none" stroke="#e0423a" stroke-width="3"/></svg></button>
    <button class="di" aria-label="Files"><span class="dots"><i></i><i></i></span><svg class="ic40" viewBox="0 0 40 40"><path d="M2 7q0-4 4-4h8l4 3h17q3 0 3 4v8H2z" fill="#2a7de1"/><rect x="1.500" y="10" width="37" height="27" rx="4" fill="url(#g-file)"/><rect x="15" y="16.500" width="10" height="3" rx="1" fill="#fff"/></svg></button>
    <button class="di" aria-label="VLC"><svg class="ic40" viewBox="0 0 40 40"><path d="M8 26h24l5 12H3z" fill="url(#g-vlc)"/><path d="M17.500 2q2.500-2 5 0L30 31q-10 6-20 0z" fill="url(#g-vlc)"/><path d="M16 7.500h8l1.500 6q-5.500 2-11 0zM12.500 22q7.500 2.500 15 0l1.700 6.500q-9.200 4-18.400 0z" fill="#e8e8e8"/></svg></button>
    <button class="di" aria-label="Software"><svg class="ic40" viewBox="0 0 40 40"><path d="M7 2h26q2 0 2 2l1 31q0 3-3 3H7q-3 0-3-3L5 4q0-2 2-2z" fill="#f0642f"/><path d="M13 4q1 8 7 8t7-8" fill="none" stroke="#fff" stroke-width="1.500"/><path d="M11 35l8-18h2l8 18M9 29h22" fill="none" stroke="#fff" stroke-width="3"/></svg></button>
    <button class="di" aria-label="Visual Studio Code"><svg class="ic40" viewBox="0 0 40 40"><path d="M28 2v10L6 29l-4-4z" fill="#1173b8"/><path d="M28 38V28L6 11l-4 4z" fill="#1b8ad8"/><path d="M28 2l9 4v28l-9 4z" fill="#2aa7f2"/></svg></button>
    <button class="di" aria-label="Workspace"><svg class="ic40" viewBox="0 0 40 40"><rect width="40" height="40" rx="9" fill="url(#g-deck)"/><path d="M9 13h9l-3 16H9q-2 0-2-2V15q0-2 2-2z" fill="#e6e8f4"/><path d="M22 9h9q2 0 2 2v14q0 2-2 2H17.500z" fill="#fff"/></svg></button>
    <button class="di" aria-label="Terminal"><span class="dots"><i></i></span><svg class="ic40" viewBox="0 0 40 40"><rect x="1.500" y="5" width="37" height="30" rx="4" fill="#4b4b4b"/><path d="M6 9l5 3-5 3M12 17h6" fill="none" stroke="#fff" stroke-width="1.600"/></svg></button>
    <button class="di" aria-label="Text Editor"><span class="dots"><i></i></span><svg class="ic40" viewBox="0 0 40 40"><rect x="4.500" y="1.500" width="31" height="37" rx="4" fill="#f2f2f0"/><path d="M4.500 10V5.500q0-4 4-4h23q4 0 4 4V10z" fill="#3584e4"/><path d="M8 14h15M8 18h13M8 22h13M8 26h9M8 30h6M19 30h13" stroke="#b3b1a8" stroke-width="1.300"/><path d="M12 33l3-8L34 7l4 4-18 19z" fill="#f8c21c"/><path d="M12 33l3-8 5 5z" fill="#eedcb4"/><path d="M34 7l2-2q2-1 3 1t1 3l-2 2z" fill="#ee6a6a"/></svg></button>
    <button class="di" aria-label="WhatsApp"><svg class="ic40" viewBox="0 0 40 40"><path d="M20 5a15 15 0 1 1-7 28.500L5 36l2-8A15 15 0 0 1 20 5z" fill="#fff"/><circle cx="20" cy="20" r="12" fill="#0b8212"/><path d="M13.500 14.500l2.500 10h1.500l2.500-7 2.500 7H24l2.500-10" fill="none" stroke="#fff" stroke-width="3.500"/></svg></button>
    <span class="dock-sep"></span>
    <button class="di" aria-label="Trash"><svg class="ic40" viewBox="0 0 40 40"><rect x="5" y="1.500" width="30" height="37" rx="4" fill="url(#g-bin)"/><path d="M8 8l1-5h22l1 5z" fill="#f5f5f5" stroke="#999"/><g fill="none" stroke="#22912f" stroke-width="4"><path d="M15.500 22.500l3-4h3l2 3"/><path d="M26 24l1.500 3-2.500 4h-3"/><path d="M18.500 31H15l-2-4 1.500-2"/></g></svg></button>
    <button class="di di-last" aria-label="Show applications"><svg class="ic40" viewBox="0 0 40 40"><g fill="none" stroke="#fff" stroke-width="3.500"><path d="M9.500 13A13 13 0 0 1 20.500 7.500M31 13.500A13 13 0 0 1 31 27.500M20 33A13 13 0 0 1 8.500 25.500"/></g><g fill="#fff"><circle cx="26" cy="10" r="4.200"/><circle cx="9" cy="20" r="4.200"/><circle cx="25" cy="30" r="4.200"/></g></svg></button>
  </nav>
</div>
</body>
</html>
```
FILE: styles.css
```css
* { box-sizing: border-box; }
body {
  margin: 0;
  font-family: "Noto Sans", "Open Sans", sans-serif;
  font-size: 14px;
  color: #fff;
}
h1, h2, h3, h4, p, ul { margin: 0; padding: 0; }
button {
  font: inherit;
  color: inherit;
  background: none;
  border: 0;
  padding: 0;
  display: flex;
  align-items: center;
  justify-content: center;
}
input { font: inherit; color: inherit; border: 0; padding: 0; outline: 0; }
svg { display: block; flex: none; }
.defs { position: absolute; width: 0; height: 0; }
.ic14 { width: 14px; height: 14px; }
.ic16 { width: 16px; height: 16px; }
.ic18 { width: 18px; height: 18px; }
.ic20 { width: 20px; height: 20px; }
.ic32 { width: 32px; height: 32px; }
.ic40 { width: 40px; height: 40px; }

.desktop {
  position: relative;
  display: flex;
  flex-direction: column;
  height: 100vh;
  overflow: hidden;
  background: #0e1117;
}

/* system panel */
.panel {
  flex: none;
  height: 32px;
  background: #131313;
  display: grid;
  grid-template-columns: 1fr auto 1fr;
  align-items: center;
  padding: 0 12px 2px 15px;
  line-height: 20px;
}
.panel-left { display: flex; align-items: center; gap: 6px; }
.ws-active { width: 29px; height: 8px; border-radius: 4px; background: #f2f2f2; }
.ws { width: 6px; height: 6px; border-radius: 3px; background: #858585; }
.panel-right { display: flex; align-items: center; justify-content: flex-end; gap: 12px; }
.sync { width: 16px; height: 16px; margin: 0 22px 0 16px; }
.battery { display: flex; align-items: center; gap: 4px; }

/* browser chrome */
.tabstrip {
  flex: none;
  height: 40px;
  background: #462a66;
  display: flex;
  align-items: center;
}
.tab-search { width: 26px; height: 28px; margin: 0 5px 0 6px; border-radius: 8px; background: #5a3886; }
.tab {
  width: 238px;
  height: 40px;
  display: flex;
  align-items: center;
  gap: 8px;
  padding: 0 11px 0 11px;
  position: relative;
}
.tab:not(.tab-active)::after {
  content: "";
  position: absolute;
  right: 0;
  top: 12px;
  width: 2px;
  height: 16px;
  background: #6d42a1;
}
.tab:nth-of-type(3)::after { display: none; }
.tab-title {
  flex: 1;
  padding-bottom: 2px;
  line-height: 20px;
  white-space: nowrap;
  overflow: hidden;
  mask-image: linear-gradient(90deg, #000 85%, transparent);
}
.tab-active {
  align-self: flex-end;
  width: 232px;
  height: 34px;
  margin-left: 3px;
  padding: 0 8px 6px;
  border-radius: 10px 10px 0 0;
  background: #6d42a1;
}
.tab-active::before {
  content: "";
  position: absolute;
  left: -10px;
  right: -10px;
  bottom: 0;
  height: 10px;
  background:
    radial-gradient(circle at 0 0, transparent 10px, #6d42a1 10px) left / 10px 10px no-repeat,
    radial-gradient(circle at 100% 0, transparent 10px, #6d42a1 10px) right / 10px 10px no-repeat;
}
.tab-new { margin-left: 12px; }
.winctl { margin-left: auto; display: flex; gap: 16px; padding-right: 10px; }
.toolbar {
  flex: none;
  height: 40px;
  padding: 0 14px 0 14px;
  background: #6d42a1;
  display: flex;
  align-items: flex-end;
}
.tb-nav { display: flex; gap: 20px; height: 34px; align-items: center; }
.omnibox {
  flex: 1;
  height: 34px;
  margin-left: 18px;
  border-radius: 17px;
  background: #563679;
  display: flex;
  align-items: center;
  gap: 12px;
  padding: 0 14px 0 5px;
}
.site-info {
  width: 24px;
  height: 24px;
  border-radius: 12px;
  background: #6d42a1;
  display: flex;
  align-items: center;
  justify-content: center;
}
.url {
  flex: 1;
  margin-left: -4px;
  height: 24px;
  padding-bottom: 2px;
  color: transparent;
  background: linear-gradient(90deg, #f1ecf7 60px, #b7a6cb 60px);
  background-clip: text;
}
.avatar {
  width: 20px;
  height: 20px;
  margin: 0 18px 7px 16px;
  border-radius: 10px;
  background: #0488d1;
  font-size: 11px;
}
.tb-menu { height: 34px; }
.bookmarks {
  flex: none;
  height: 41px;
  background: #6d42a1;
  border-bottom: 1px solid #8c6ab6;
  display: flex;
  align-items: center;
  gap: 16px;
  padding: 0 15px 0 18px;
  white-space: nowrap;
}
.bm { display: flex; align-items: center; gap: 6px; color: #fff; text-decoration: none; line-height: 20px; }
.bm:not([aria-label]) { margin-right: 2px; }
.bookmarks .bm-apps { margin-right: 0; }
.bookmarks .bm-all { margin: 0; }
.bm-sep { width: 2px; height: 16px; margin-right: -3px; background: #4a2d6c; }
.bm-end { margin-left: auto; display: flex; align-items: center; gap: 18px; }

/* web app */
.app {
  flex: 1;
  min-height: 0;
  display: flex;
  position: relative;
  font-family: "Noto Sans CJK SC", "Noto Sans", sans-serif;
  color: #fafafa;
}
.app::before {
  content: "";
  position: absolute;
  inset: 0 0 auto;
  height: 2px;
  background: linear-gradient(90deg, #ff4b4b, #fffd80);
}
.sidebar {
  flex: none;
  width: 336px;
  padding: 97px 24px 0;
  background: #262730;
  display: flex;
  flex-direction: column;
  align-items: flex-start;
}
.side-title {
  display: flex;
  align-items: center;
  gap: 9px;
  font-size: 21px;
  font-weight: 600;
  line-height: 32px;
  margin-bottom: 15px;
}
.compass { width: 26px; height: 26px; }
.side-link {
  display: flex;
  align-items: center;
  gap: 7px;
  line-height: 26px;
  margin-bottom: 16px;
  color: #2b90f5;
  text-decoration: underline;
  text-underline-offset: 2px;
}
.st-button {
  height: 40px;
  border: 1px solid #4b4c55;
  border-radius: 8px;
  background: #2b2c36;
}
.logout { padding: 0 12px; gap: 7px; margin-bottom: 15px; }
.goto { border: 0; margin: 0; padding: 0; }
.goto legend { padding: 0; line-height: 22px; margin: 0 0 5px; font-size: 13px; }
.goto label { display: flex; align-items: center; gap: 4px; line-height: 26px; }
.goto input {
  appearance: none;
  width: 16px;
  height: 16px;
  margin: 0 5px 0 0;
  border-radius: 8px;
  background: #1a1c24;
}
.goto input:checked { background: #fff; border: 5px solid #ff4b4b; }

.main { flex: 1; min-width: 0; display: flex; flex-direction: column; }
.st-header {
  flex: none;
  height: 60px;
  padding: 10px 30px 0 0;
  display: flex;
  align-items: center;
  justify-content: flex-end;
  gap: 20px;
  font-size: 13px;
}
.scroll { flex: 1; min-height: 0; overflow: hidden; }
.content { margin: -22px 86px 0 80px; display: flex; flex-direction: column; }
.download { align-self: flex-start; background: #131720; padding: 0 13px; gap: 5px; }
.st-h2 {
  display: flex;
  align-items: center;
  gap: 9px;
  margin-top: 41px;
  font-size: 24px;
  line-height: 36px;
  font-weight: 600;
}
.st-label { margin-top: 19px; font-size: 12px; line-height: 20px; }
.select-wrap { position: relative; margin-top: 6px; }
select {
  width: 100%;
  height: 40px;
  padding: 0 15px;
  border: 0;
  border-radius: 8px;
  appearance: none;
  background: #262730;
  color: #fafafa;
  font: inherit;
}
.chev { position: absolute; right: 13px; top: 12px; width: 16px; height: 16px; }

/* pdf viewer */
.pdf {
  margin-top: 16px;
  height: 600px;
  border: 2px solid;
  border-color: #9a9a9a #eee #eee #9a9a9a;
  display: flex;
  flex-direction: column;
  font-family: Roboto, sans-serif;
  background: #282828;
}
.pdf-bar {
  flex: none;
  height: 56px;
  padding: 0 22px;
  background: #3c3c3c;
  display: flex;
  align-items: center;
  font-size: 13px;
}
.pb { width: 20px; height: 32px; }
.pdf-title { width: 475px; margin: 0 30px 0 22px; font-size: 14px; font-weight: 500; white-space: nowrap; }
.page-no, .zoom { height: 20px; width: 24px; background: #191919; text-align: center; }
.page-of { width: 21px; margin: 0 24px 0 4px; white-space: nowrap; }
.pb-sep { width: 1px; height: 20px; background: #6a6a6a; }
.pb-sep + .pb { margin-left: 10px; }
.zoom { width: 46px; margin: 0 10px; }
.zoom + .pb { margin-right: 10px; }
.pb-sep + .pb-fit { margin: 0 12px 0 17px; }
.pdf-actions { margin-left: auto; display: flex; gap: 16px; }
.pdf-body { flex: 1; min-height: 0; display: flex; overflow: hidden; }
.thumbs {
  flex: none;
  width: 301px;
  padding-top: 18px;
  background: #292a2b;
  border-right: 1px solid #5f5f5f;
  display: flex;
  flex-direction: column;
  align-items: center;
}
.thumb {
  position: relative;
  width: 120px;
  height: 152px;
  padding: 4px 5px 0;
  border: 6px solid #8ab4f8;
  background: #fff;
  color: #222529;
  overflow: hidden;
  white-space: nowrap;
}
.th-name { font: 800 6px/7px Inter, sans-serif; }
.th-role { font: 800 4px/5px Inter, sans-serif; }
.th-lines { width: 98px; height: 121px; }
.th-contact { position: absolute; right: 12px; top: 4px; width: 20px; height: 11px; }
.th-no { margin-top: 5px; font-size: 13px; line-height: 15px; }
.viewer { flex: 1; min-width: 0; display: flex; }
.sheet {
  width: 816px;
  height: 1056px;
  margin: 3px auto 0;
  padding: 24px 0 0 38px;
  background: #fff;
  color: #212529;
  box-shadow: 0 0 6px #111;
  display: grid;
  grid-template-columns: 540px 1fr;
  grid-template-rows: 220px 1fr;
  align-content: start;
  font-family: Lato, sans-serif;
  font-size: 15px;
  line-height: 18px;
  white-space: nowrap;
}
.sheet h1 { font: 700 46px/62px Inter, sans-serif; }
.sheet h2 { font: 700 28px/30px Inter, sans-serif; }
.summary { font-style: italic; margin-top: 6px; }
.contact { font-style: normal; line-height: 21px; padding-top: 3px; }
.sheet h3 { font: 700 16px/20px Inter, sans-serif; color: #da70d6; margin-top: 5px; }
.sheet h4 { font-size: 21px; line-height: 27px; margin-top: 5px; }
.line16 { font-size: 16px; line-height: 23px; }
.line15 { line-height: 21px; }
.sheet ul { padding-left: 33px; margin-top: 1px; }
.sheet li { margin-bottom: 2px; }
.skills { margin: 6px 0 32px; }
.degree { font-size: 16px; line-height: 22px; font-weight: 700; margin-top: 5px; }
.vscroll {
  flex: none;
  width: 15px;
  padding: 6px 0;
  background: #fbfbfb;
  display: flex;
  flex-direction: column;
  align-items: center;
  gap: 7px;
}
.arrow-up { border: 5px solid transparent; border-top: 0; border-bottom-color: #858585; }
.arrow-down { border: 5px solid transparent; border-bottom: 0; border-top-color: #858585; margin-top: auto; }
.vthumb { width: 9px; height: 255px; border-radius: 5px; background: #8b8b8b; }
.mail { margin-top: 47px; }

/* launcher lies over the window's left edge */
.dock {
  position: absolute;
  inset: 32px auto 0 0;
  width: 58px;
  padding: 4px 0;
  background: rgba(18, 20, 20, .78);
  display: flex;
  flex-direction: column;
  align-items: center;
}
.di { position: relative; width: 52px; height: 56px; flex: none; }
.di-on { height: 52px; margin: 2px 0; border-radius: 12px; background: rgba(110, 110, 110, .45); }
.di-last { margin-top: auto; }
.dots {
  position: absolute;
  left: 0;
  top: 0;
  bottom: 0;
  display: flex;
  flex-direction: column;
  justify-content: center;
  gap: 2px;
}
.dots i { width: 5px; height: 5px; border-radius: 3px; background: #0073e5; }
.dock-sep { width: 40px; height: 1px; margin: 1px 0; background: #444; }
```
